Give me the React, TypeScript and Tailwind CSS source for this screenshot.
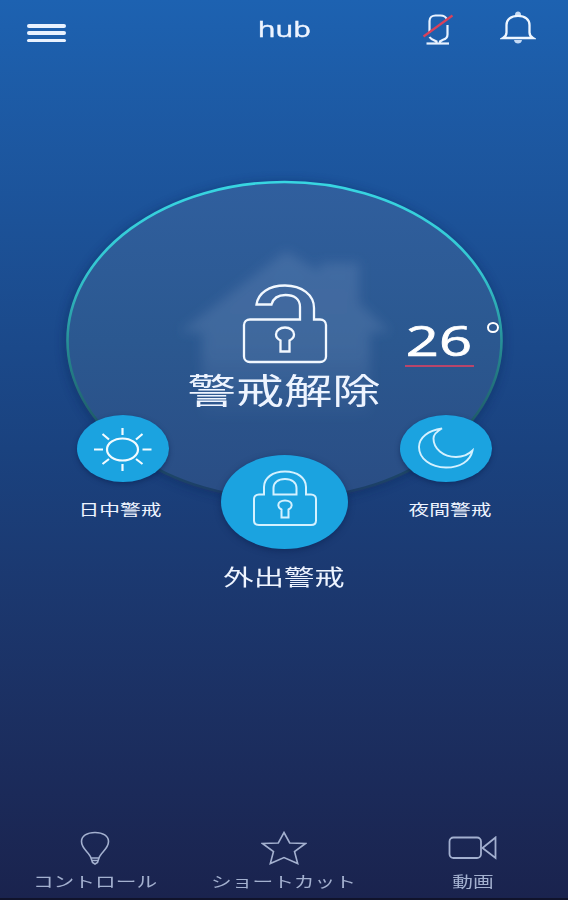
import React from 'react';

const fontStack = "font-['Open_Sans','Noto_Sans_CJK_JP',sans-serif]";

function WideText({ className, children }: { className: string; children: React.ReactNode }) {
  return <span className={`inline-block scale-x-[1.38] whitespace-nowrap ${className}`}>{children}</span>;
}

function MutedMicIcon() {
  return (
    <svg width="32" height="36" viewBox="0 0 32 36" fill="none">
      <g stroke="#e8f2ff" strokeWidth="2.2">
        <path d="M7.500 21.500V10C7.500 6.500 10.500 4.500 13.500 4.500H18.500C21.500 4.500 24 6 25 8.500" />
        <path d="M25.500 14V23.500C25.500 26 24 28 21 28.800L18 30.500V32.500M7.500 26C8.500 27.500 10 28.500 12 29.200L14.500 30.500V32.500" />
        <path d="M4.500 32.500H27" />
      </g>
      <path d="M1.500 25.500L30.500 4.500" stroke="#d9415a" strokeWidth="2.200" />
    </svg>
  );
}

function BellIcon() {
  return (
    <svg width="36" height="34" viewBox="0 0 36 34" fill="none">
      <path d="M15 3.500C15 -0.500 21 -0.500 21 3.500V5H15Z" fill="#c4daf5" />
      <path
        d="M3 27H33C30.500 25.500 29.500 24 29.500 21.500V14C29.500 8.500 25 4.800 18 4.800S6.500 8.500 6.500 14V21.500C6.500 24 5.500 25.500 3 27Z"
        stroke="#eef6ff"
        strokeWidth="2.300"
      />
      <path d="M14 29H22C21.500 33.800 14.500 33.800 14 29Z" fill="#c4daf5" />
    </svg>
  );
}

function OpenLockIcon() {
  return (
    <svg width="86" height="80" viewBox="0 0 86 80" fill="none" stroke="#f2f8ff" strokeWidth="2.300">
      <path d="M58 35.500V23C58 15 52 11 43.500 11C35.500 11 31 15 29.500 20.500H14.500C16 9 27 1.500 43 1.500C60 1.500 72 11 72 24V35.500H78C81.500 35.500 84 38 84 41V72.500C84 75.700 81.500 78 78 78H8C4.500 78 2 75.700 2 72.500V41C2 38 4.500 35.500 8 35.500Z" />
      <path d="M38.500 67.500V56.500C35.500 55 34 52.500 34 50.500C34 46.500 38 43.500 43 43.500S52 46.500 52 50.500C52 52.500 50.500 55 47.500 56.500V67.500Z" />
    </svg>
  );
}

function LockIcon() {
  return (
    <svg width="66" height="57" viewBox="0 0 66 57" fill="none" stroke="#d4f1ff" strokeWidth="2">
      <path d="M12 24.500V17C12 8 20.500 1.500 33 1.500S54 8 54 17V24.500H59C62 24.500 64 26.500 64 29V50.500C64 53.200 62 55 59 55H7C4 55 2 53.200 2 50.500V29C2 26.500 4 24.500 7 24.500Z" />
      <path d="M21.500 24.500V18C21.500 12.500 26 9 33 9S44.500 12.500 44.500 18V24.500Z" />
      <path d="M29.500 47.500V39.500C27.500 38.500 26.300 37 26.300 35.200C26.300 32.500 29 30.500 33 30.500S39.700 32.500 39.700 35.200C39.700 37 38.500 38.500 36.500 39.500V47.500Z" />
    </svg>
  );
}

function SunIcon() {
  return (
    <svg width="60" height="46" viewBox="0 0 60 46" fill="none" stroke="#f2fbff" strokeWidth="2.200">
      <ellipse cx="29.500" cy="23.500" rx="15.500" ry="11" />
      <path d="M29.500 2V9M29.500 38V45M1 23.500H10M49.500 23.500H58.500M9.500 8L16 13.500M49.500 8L43 13.500M9.500 38L16 33M49.500 38L43 33" />
    </svg>
  );
}

function MoonIcon() {
  return (
    <svg width="58" height="43" viewBox="0 0 58 43" fill="none" stroke="#d4f1ff" strokeWidth="1.900">
      <path d="M25 1.500C11 3.500 2 10.500 2 20C2 31.500 13.500 40.500 29 40.500C43 40.500 53.500 34 55.500 23.500C51 28 46 30 39 30C26 30 16.500 21.500 16.500 11.500C16.500 7 19.500 4.500 25 1.500Z" />
    </svg>
  );
}

function BulbIcon() {
  return (
    <svg width="30" height="34" viewBox="0 0 30 34" fill="none" stroke="#a3b0cf" strokeWidth="1.600">
      <path d="M11 27C9.500 21.500 1.500 18 1.500 10.500C1.500 5 7 1.500 15 1.500S28.500 5 28.500 10.500C28.500 18 20.500 21.500 19 27ZM11 27L12.500 31.500L15 33L17.500 31.500L19 27M12 29.500H18" />
    </svg>
  );
}

function StarIcon() {
  return (
    <svg width="46" height="34" viewBox="0 0 46 34" fill="none" stroke="#a3b0cf" strokeWidth="1.600">
      <path d="M23 1.500L28.700 12L44.500 12.500L33.500 20.500L36.700 32.500L23 26.500L9.300 32.500L12.500 20.500L1.500 12.500L17.300 12Z" />
    </svg>
  );
}

function VideoIcon() {
  return (
    <svg width="50" height="24" viewBox="0 0 50 24" fill="none" stroke="#a3b0cf" strokeWidth="1.800">
      <rect x="1.500" y="1.500" width="31.500" height="20.500" rx="4" />
      <path d="M34.500 12L47.500 1.500V22Z" />
    </svg>
  );
}

function DialBackground() {
  return (
    <svg className="absolute inset-0 overflow-visible" width="438" height="320" viewBox="0 0 438 320">
      <defs>
        <linearGradient id="ring" x1="0" y1="0" x2="0" y2="1">
          <stop offset="0" stopColor="#38d6e2" />
          <stop offset="0.28" stopColor="#34c6d0" />
          <stop offset="0.55" stopColor="#24858c" />
          <stop offset="0.78" stopColor="#1f5766" />
          <stop offset="1" stopColor="#1c3b68" />
        </linearGradient>
        <linearGradient id="disc" x1="0" y1="0" x2="0" y2="1">
          <stop offset="0" stopColor="#305f9e" />
          <stop offset="0.5" stopColor="#2b5890" />
          <stop offset="1" stopColor="#2a4d84" />
        </linearGradient>
        <linearGradient id="house" x1="0" y1="0" x2="0" y2="1">
          <stop offset="0" stopColor="#7593bf" stopOpacity="0.28" />
          <stop offset="0.6" stopColor="#7593bf" stopOpacity="0.26" />
          <stop offset="1" stopColor="#7593bf" stopOpacity="0" />
        </linearGradient>
        <filter id="soft" x="-20%" y="-20%" width="140%" height="140%">
          <feGaussianBlur stdDeviation="5.500" />
        </filter>
      </defs>
      <ellipse cx="219" cy="162" rx="219" ry="160" fill="#0b2454" opacity="0.45" filter="url(#soft)" />
      <ellipse cx="219.500" cy="160.500" rx="217" ry="158.500" fill="url(#disc)" stroke="url(#ring)" strokeWidth="2.600" />
      <path
        d="M221 71L255 92V83H294V123L325 152H305V240H137V152H115Z"
        fill="url(#house)"
        filter="url(#soft)"
      />
    </svg>
  );
}

const tabs = [
  { label: 'コントロール', icon: <BulbIcon /> },
  { label: 'ショートカット', icon: <StarIcon /> },
  { label: '動画', icon: <VideoIcon /> },
];

interface ModeButtonProps {
  icon: React.ReactNode;
  label: string;
  className: string;
  labelClassName: string;
}

function ModeButton({ icon, label, className, labelClassName }: ModeButtonProps) {
  return (
    <button className={`absolute flex w-[92px] flex-col items-center ${className}`}>
      <span className="flex h-[67px] w-[92px] items-center justify-center rounded-[50%] bg-[#1ba3e0] shadow-[0_2px_5px_rgba(8,30,75,0.5)]">
        {icon}
      </span>
      <WideText className={`mt-4 text-[15px] leading-[22px] ${labelClassName}`}>{label}</WideText>
    </button>
  );
}

export default function App() {
  return (
    <div
      className={`flex h-[900px] w-[568px] flex-col overflow-hidden border-b-2 border-[#10132b] bg-linear-to-b from-[#1d62b1] via-[#1a427f] to-[#1a234e] text-[#eef4ff] ${fontStack}`}
    >
      <header className="grid h-[60px] grid-cols-3 px-[27px]">
        <button className="mt-6 flex h-[18px] w-[39px] flex-col justify-between">
          <span className="h-[3.5px] w-full rounded-full bg-[#e9f2ff]" />
          <span className="h-[3.5px] w-full rounded-full bg-[#e9f2ff]" />
          <span className="h-[3.5px] w-full rounded-full bg-[#e9f2ff]" />
        </button>
        <h1 className="pt-3.5 text-center">
          <WideText className="text-[21px] leading-[30px] [-webkit-text-stroke:0.4px]">hub</WideText>
        </h1>
        <div className="flex justify-end gap-[46px] pt-[11px] pr-[5px]">
          <MutedMicIcon />
          <BellIcon />
        </div>
      </header>

      <main className="flex flex-1 flex-col items-center pt-[120px]">
        <div className="relative flex h-[320px] w-[438px] flex-col items-center pt-[104px]">
          <DialBackground />
          <div className="relative flex flex-col items-center">
            <div className="pl-0.5">
              <OpenLockIcon />
            </div>
            <WideText className="mt-[3px] text-[35px] leading-[48px]">警戒解除</WideText>
          </div>

          <div className="absolute top-[134px] left-[340px] flex items-start">
            <div className="flex h-[53px] w-[69px] justify-center border-b-2 border-[#b9456a]">
              <WideText className="text-[42px] leading-[52px] text-white [-webkit-text-stroke:0.7px]">26</WideText>
            </div>
            <span className="mt-2 ml-[13px] h-[11px] w-3 rounded-[50%] border-2 border-white" />
          </div>

          <ModeButton
            className="top-[235px] left-3"
            labelClassName="-translate-x-[3px]"
            icon={<SunIcon />}
            label="日中警戒"
          />
          <ModeButton
            className="top-[235px] left-[335px]"
            labelClassName="translate-x-1"
            icon={<MoonIcon />}
            label="夜間警戒"
          />

          <button className="absolute top-[275px] left-[156px] flex w-[127px] flex-col items-center">
            <span className="flex h-[94px] w-[127px] items-center justify-center rounded-[50%] bg-[#1ba3e0] pb-2 shadow-[0_2px_6px_rgba(8,30,75,0.5)]">
              <LockIcon />
            </span>
            <WideText className="mt-[11px] text-[22px] leading-[32px]">外出警戒</WideText>
          </button>
        </div>
      </main>

      <nav className="grid h-[70px] grid-cols-3 text-[#a3b0cf]">
        {tabs.map((tab) => (
          <button key={tab.label} className="flex flex-col items-center">
            <span className="flex h-[40px] items-center">{tab.icon}</span>
            <WideText className="mt-0.5 text-[15px] leading-[22px]">{tab.label}</WideText>
          </button>
        ))}
      </nav>
    </div>
  );
}
